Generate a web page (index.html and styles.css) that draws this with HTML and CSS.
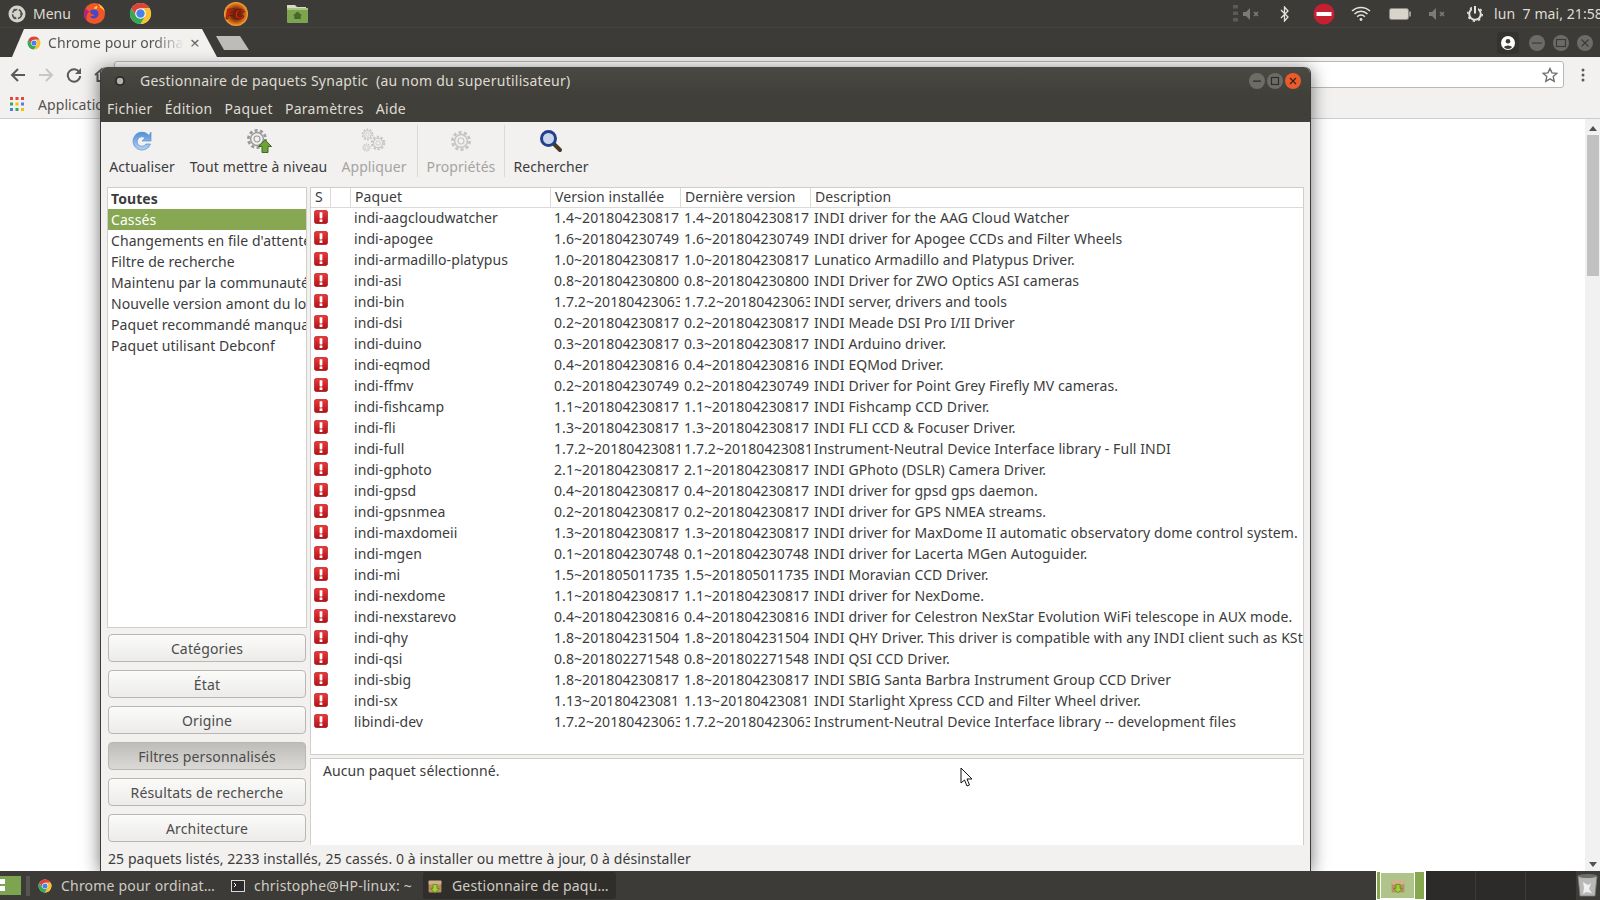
FILE: index.html
```html
<!DOCTYPE html>
<html lang="fr">
<head>
<meta charset="utf-8">
<title>Gestionnaire de paquets Synaptic</title>
<link rel="stylesheet" href="styles.css">
</head>
<body>
<svg class="defs" width="0" height="0">
  <defs>
    <linearGradient id="errg" x1="0" y1="0" x2="0" y2="1"><stop offset="0" stop-color="#ee3a3a"/><stop offset="1" stop-color="#b01218"/></linearGradient>
    <linearGradient id="refg" x1="0" y1="0" x2="0" y2="1"><stop offset="0" stop-color="#4f8fd8"/><stop offset="1" stop-color="#b7d2ee"/></linearGradient>
    <radialGradient id="fcg"><stop offset="0.4" stop-color="#6d2608"/><stop offset="0.82" stop-color="#e0701a"/><stop offset="1" stop-color="#f4ae3a"/></radialGradient>
    <symbol id="err" viewBox="0 0 14 14"><rect x="0.3" y="0.3" width="13.4" height="13.4" rx="2.6" fill="url(#errg)" stroke="#a11419" stroke-width="0.6"/><rect x="5.6" y="2.2" width="2.8" height="6.2" rx="0.6" fill="#fff"/><rect x="5.6" y="9.4" width="2.8" height="2.6" fill="#fff"/></symbol>
    <symbol id="chrome" viewBox="0 0 24 24"><circle cx="12" cy="12" r="11" fill="#fff"/><path fill="#db4437" d="M2.47 6.5A11 11 0 0 1 21.53 6.5L12 6.5A5.5 5.5 0 0 0 7.24 14.75Z"/><path fill="#fbc02d" d="M21.53 6.5A11 11 0 0 1 12 23L16.76 14.75A5.5 5.5 0 0 0 12 6.5Z"/><path fill="#34a853" d="M12 23A11 11 0 0 1 2.47 6.5L7.24 14.75A5.5 5.5 0 0 0 16.76 14.75Z"/><circle cx="12" cy="12" r="4.4" fill="#4a80e8"/></symbol>
    <symbol id="gear" viewBox="0 0 24 24"><circle cx="12" cy="12" r="9.4" fill="none" stroke="currentColor" stroke-width="3" stroke-dasharray="3.4 2.5"/><circle cx="12" cy="12" r="7" fill="#eee" stroke="currentColor" stroke-width="1.6"/><circle cx="12" cy="12" r="3.2" fill="#f2f1f0" stroke="currentColor" stroke-width="1.2"/></symbol>
    <symbol id="box" viewBox="0 0 20 20"><rect x="2" y="5" width="16" height="13" rx="1" fill="#b98f60"/><rect x="2" y="3" width="16" height="5" rx="1" fill="#d4b089"/><path d="M7.5 8h5v5h3L10 18.5 4.500 13h3z" fill="#a8cf3a" stroke="#4e8a1c" stroke-width="1"/></symbol>
  </defs>
</svg>

<header class="panel">
  <div class="panel-left">
    <svg class="p-logo" width="18" height="18" viewBox="0 0 18 18"><circle cx="9" cy="9" r="8.500" fill="#d6d3cc"/><circle cx="9" cy="9" r="4.500" fill="none" stroke="#55534e" stroke-width="1.600" stroke-dasharray="6 1.500"/><circle cx="13.500" cy="9" r="1.300" fill="#55534e"/><circle cx="6.700" cy="5" r="1.300" fill="#55534e"/><circle cx="6.700" cy="13" r="1.300" fill="#55534e"/></svg>
    <span class="p-menu">Menu</span>
    <svg class="p-fx" width="23" height="23" viewBox="0 0 24 24"><circle cx="12" cy="12" r="11" fill="#f0562a"/><path d="M3 6.500C1.500 9 1 11 1 12.500c0 3 1 5.500 3 7.500-1-4 0-8 3-10.500-1.500 0-3-1-4-3z" fill="#b3257c"/><path d="M7.500 9.500c2.500-2.500 6.500-2 8 .5s.5 6-2.500 7c-2.500.8-5.200-.5-5.700-3 1 1 3.500 1 4.500-.3-1.500-.5-4.500-1-4.300-4.200z" fill="#4a46c8"/><path d="M12 1c4 .2 7.500 2.300 9.500 5.500.8 1.500 1.300 3 1.400 4.500-1-2.500-3-4.500-5.400-5 .5-1.800-.5-3.800-2.500-4.500-1-.3-2-.5-3.500-.5z" fill="#ffc52b"/><path d="M11 7c1-1.500 2-2.200 3.500-3 .5 1 .5 1.500 0 3z" fill="#ffd34d"/></svg>
    <svg class="p-ch" width="23" height="23"><use href="#chrome"/></svg>
    <svg class="p-fc" width="24" height="24" viewBox="0 0 24 24"><circle cx="12" cy="12" r="12" fill="url(#fcg)"/><text x="1.500" y="17" class="fc-text">FC</text></svg>
    <svg class="p-folder" width="21" height="19" viewBox="0 0 21 19"><path d="M0 1h8l2 2h9v3H0z" fill="#d9d9c8"/><rect y="4" width="21" height="15" rx="1" fill="#7da44f"/><rect y="4" width="21" height="2" fill="#a6c67c"/><path d="M10.500 7.500l4.500 4h-1.300v3.500h-6.400v-3.500h-1.300z" fill="#46682a"/></svg>
  </div>
  <div class="panel-right">
    <svg class="p-dots" width="5" height="17"><rect width="5" height="3.500" fill="#5c5b57"/><rect y="6.500" width="5" height="3.500" fill="#5c5b57"/><rect y="13" width="5" height="3.500" fill="#5c5b57"/></svg>
    <svg class="p-spk" width="18" height="12" viewBox="0 0 18 12"><path d="M0 4h3l4-4v12L3 8H0z" fill="#7c7b76"/><path d="M11 4l4 4M15 4l-4 4" stroke="#7c7b76" stroke-width="1.600"/></svg>
    <svg class="p-bt" width="9" height="16" viewBox="0 0 9 16"><path d="M1 4l7 7-3.500 4V1L8 5 1 12" fill="none" stroke="#e6e3dc" stroke-width="1.300"/></svg>
    <svg class="p-stop" width="22" height="22" viewBox="0 0 22 22"><circle cx="11" cy="11" r="10.500" fill="#c51f32"/><rect x="3.500" y="9" width="15" height="4" fill="#fff"/></svg>
    <svg class="p-wifi" width="20" height="15" viewBox="0 0 20 15"><path d="M1 5a13 13 0 0 1 18 0M3.500 8a9 9 0 0 1 13 0M6.200 10.800a5 5 0 0 1 7.600 0" fill="none" stroke="#e6e3dc" stroke-width="1.500"/><circle cx="10" cy="13.500" r="1.400" fill="#e6e3dc"/></svg>
    <svg class="p-bat" width="22" height="12" viewBox="0 0 22 12"><rect x="0.500" y="0.500" width="19" height="11" rx="2" fill="#d8d4cb" stroke="#8b8a85"/><rect x="20" y="3.500" width="2" height="5" fill="#9b9a95"/></svg>
    <svg class="p-spk2" width="18" height="12" viewBox="0 0 18 12"><path d="M0 4h3l4-4v12L3 8H0z" fill="#7c7b76"/><path d="M11 4l4 4M15 4l-4 4" stroke="#7c7b76" stroke-width="1.600"/></svg>
    <svg class="p-pow" width="16" height="16" viewBox="0 0 16 16"><circle cx="8" cy="8" r="5.800" fill="none" stroke="#e6e3dc" stroke-width="2"/><circle cx="8" cy="8" r="7.200" fill="none" stroke="#e6e3dc" stroke-width="1.600" stroke-dasharray="2.200 3.450"/><rect x="5" y="0" width="6" height="6" fill="#3c3b37"/><rect x="7" y="0" width="2" height="7.500" fill="#e6e3dc"/></svg>
    <span class="p-date">lun  7 mai, 21:58</span>
  </div>
</header>

<main class="browser">
  <div class="tabstrip">
    <div class="tab">
      <svg class="tab-ic" width="14" height="14"><use href="#chrome"/></svg>
      <span class="tab-title">Chrome pour ordina</span>
      <span class="tab-x">×</span>
    </div>
    <div class="newtab"></div>
    <div class="win-ctl">
      <span class="profile"><svg width="14" height="14" viewBox="0 0 14 14"><circle cx="7" cy="7" r="7" fill="#fff"/><circle cx="7" cy="5.300" r="2.300" fill="#3c3b37"/><path d="M2.800 11a5 3.500 0 0 1 8.400 0 5.500 5.500 0 0 1-8.400 0z" fill="#3c3b37"/></svg></span>
      <span class="cb"><svg width="16" height="16"><rect x="3" y="7.500" width="10" height="1.200" fill="#3c3b37"/></svg></span>
      <span class="cb"><svg width="16" height="16"><rect x="3.500" y="4.500" width="9" height="7" fill="none" stroke="#3c3b37" stroke-width="1.200"/></svg></span>
      <span class="cb"><svg width="16" height="16"><path d="M4.500 4.500l7 7M11.500 4.500l-7 7" stroke="#3c3b37" stroke-width="1.200"/></svg></span>
    </div>
  </div>
  <div class="navbar">
    <svg class="nav-ic" width="16" height="16" viewBox="0 0 16 16"><path d="M15 8H2M8 2L2 8l6 6" fill="none" stroke="#5a5a5a" stroke-width="2"/></svg>
    <svg class="nav-ic" width="16" height="16" viewBox="0 0 16 16"><path d="M1 8h13M8 2l6 6-6 6" fill="none" stroke="#c6c6c6" stroke-width="2"/></svg>
    <svg class="nav-ic" width="16" height="16" viewBox="0 0 16 16"><path d="M13.500 5.500A6.200 6.200 0 1 0 14.200 9" fill="none" stroke="#5a5a5a" stroke-width="2"/><path d="M15 1v6H9z" fill="#5a5a5a"/></svg>
    <svg class="nav-ic" width="16" height="16" viewBox="0 0 16 16"><path d="M1 8l7-6 7 6M3.500 7v7h9V7" fill="none" stroke="#5a5a5a" stroke-width="2"/></svg>
    <div class="omnibox">
      <svg width="16" height="16" viewBox="0 0 16 16"><path d="M8 1.500l2 4.400 4.700.5-3.500 3.200 1 4.700L8 11.900l-4.200 2.400 1-4.700L1.300 6.400 6 5.900z" fill="none" stroke="#6f6f6f" stroke-width="1.400"/></svg>
    </div>
    <svg class="menu-ic" width="4" height="14"><circle cx="2" cy="2" r="1.500" fill="#5a5a5a"/><circle cx="2" cy="7" r="1.500" fill="#5a5a5a"/><circle cx="2" cy="12" r="1.500" fill="#5a5a5a"/></svg>
  </div>
  <div class="bookmarks">
    <svg width="14" height="14" viewBox="0 0 14 14"><rect width="3" height="3" fill="#e8453c"/><rect x="5.500" width="3" height="3" fill="#e8453c"/><rect x="11" width="3" height="3" fill="#e8453c"/><rect y="5.500" width="3" height="3" fill="#34a853"/><rect x="5.500" y="5.500" width="3" height="3" fill="#fbbc05"/><rect x="11" y="5.500" width="3" height="3" fill="#4a80e8"/><rect y="11" width="3" height="3" fill="#4a80e8"/><rect x="5.500" y="11" width="3" height="3" fill="#34a853"/><rect x="11" y="11" width="3" height="3" fill="#fbbc05"/></svg>
    <span class="bm-text">Applications</span>
  </div>
  <div class="page">
    <div class="scrollbar">
      <span class="arrow-up"></span>
      <span class="thumb"></span>
      <span class="arrow-down"></span>
    </div>
  </div>
</main>

<section class="window">
  <div class="titlebar">
    <svg class="menu-dot" width="12" height="12"><circle cx="6" cy="6" r="5" fill="#2d2c28"/><circle cx="6" cy="6" r="3.200" fill="#b5b3ad"/></svg>
    <span class="wtitle">Gestionnaire de paquets Synaptic  (au nom du superutilisateur)</span>
    <div class="wbtns">
      <span class="wb"><svg width="18" height="18"><rect x="5" y="8.500" width="8" height="1.300" fill="#2f2e2b"/></svg></span>
      <span class="wb"><svg width="18" height="18"><rect x="5.500" y="5.500" width="7" height="7" fill="none" stroke="#2f2e2b" stroke-width="1.200"/></svg></span>
      <span class="wb wb-close"><svg width="18" height="18"><path d="M6 6l6 6M12 6l-6 6" stroke="#3a2015" stroke-width="1.200"/></svg></span>
    </div>
  </div>
  <nav class="menubar">
    <span>Fichier</span><span>Édition</span><span>Paquet</span><span>Paramètres</span><span>Aide</span>
  </nav>
  <div class="toolbar">
    <div class="tool t1">
      <svg width="24" height="24" viewBox="0 0 24 24"><path d="M19 6.500A9 9 0 1 0 20.500 15h-4.600A4.700 4.700 0 1 1 15 9l-3 3h9V3z" fill="url(#refg)" stroke="#5a94d6" stroke-width="0.700"/></svg>
      <span>Actualiser</span>
    </div>
    <div class="tool t2">
      <span class="upg"><svg class="ic-gear" width="22" height="22"><use href="#gear"/></svg><svg class="up-arrow" width="14" height="14" viewBox="0 0 14 14"><path d="M7 .8L13.500 7.500H10V13.500H4V7.500H.5z" fill="#6ea33c" stroke="#3f6b1d"/></svg></span>
      <span>Tout mettre à niveau</span>
    </div>
    <div class="tool t3 off">
      <svg class="ic-gears" width="26" height="26" viewBox="0 0 26 26"><svg x="0" y="0" width="13" height="13"><use href="#gear"/></svg><svg x="9" y="7" width="16" height="16"><use href="#gear"/></svg><svg x="1" y="15" width="9" height="9"><use href="#gear"/></svg></svg>
      <span>Appliquer</span>
    </div>
    <div class="tool t4 off">
      <svg class="ic-gears" width="22" height="22"><use href="#gear"/></svg>
      <span>Propriétés</span>
    </div>
    <div class="tool t5">
      <svg width="24" height="24" viewBox="0 0 24 24"><path d="M14 14l7 7" stroke="#4a3a22" stroke-width="4" stroke-linecap="round"/><circle cx="9.500" cy="9.500" r="7" fill="#c9d6ea" stroke="#23408c" stroke-width="3"/></svg>
      <span>Rechercher</span>
    </div>
  </div>

  <div class="content">
    <aside class="side">
      <ul class="filters">
        <li class="f-head">Toutes</li>
        <li class="f-sel">Cassés</li>
        <li>Changements en file d'attente</li>
        <li>Filtre de recherche</li>
        <li>Maintenu par la communauté</li>
        <li>Nouvelle version amont du local</li>
        <li>Paquet recommandé manquant</li>
        <li>Paquet utilisant Debconf</li>
      </ul>
      <div class="sbtns">
        <button>Catégories</button>
        <button>État</button>
        <button>Origine</button>
        <button class="on">Filtres personnalisés</button>
        <button>Résultats de recherche</button>
        <button>Architecture</button>
      </div>
    </aside>
    <div class="right">
      <div class="tablewrap">
        <table>
          <colgroup><col class="c-s"><col class="c-m"><col class="c-p"><col class="c-v"><col class="c-d"><col></colgroup>
          <thead><tr><th>S</th><th></th><th>Paquet</th><th>Version installée</th><th>Dernière version</th><th>Description</th></tr></thead>
          <tbody>
            <tr><td><svg class="err"><use href="#err"/></svg></td><td></td><td>indi-aagcloudwatcher</td><td>1.4~201804230817~</td><td>1.4~201804230817~</td><td>INDI driver for the AAG Cloud Watcher</td></tr>
            <tr><td><svg class="err"><use href="#err"/></svg></td><td></td><td>indi-apogee</td><td>1.6~201804230749~</td><td>1.6~201804230749~</td><td>INDI driver for Apogee CCDs and Filter Wheels</td></tr>
            <tr><td><svg class="err"><use href="#err"/></svg></td><td></td><td>indi-armadillo-platypus</td><td>1.0~201804230817~</td><td>1.0~201804230817~</td><td>Lunatico Armadillo and Platypus Driver.</td></tr>
            <tr><td><svg class="err"><use href="#err"/></svg></td><td></td><td>indi-asi</td><td>0.8~201804230800~</td><td>0.8~201804230800~</td><td>INDI Driver for ZWO Optics ASI cameras</td></tr>
            <tr><td><svg class="err"><use href="#err"/></svg></td><td></td><td>indi-bin</td><td>1.7.2~201804230630</td><td>1.7.2~201804230630</td><td>INDI server, drivers and tools</td></tr>
            <tr><td><svg class="err"><use href="#err"/></svg></td><td></td><td>indi-dsi</td><td>0.2~201804230817~</td><td>0.2~201804230817~</td><td>INDI Meade DSI Pro I/II Driver</td></tr>
            <tr><td><svg class="err"><use href="#err"/></svg></td><td></td><td>indi-duino</td><td>0.3~201804230817~</td><td>0.3~201804230817~</td><td>INDI Arduino driver.</td></tr>
            <tr><td><svg class="err"><use href="#err"/></svg></td><td></td><td>indi-eqmod</td><td>0.4~201804230816~</td><td>0.4~201804230816~</td><td>INDI EQMod Driver.</td></tr>
            <tr><td><svg class="err"><use href="#err"/></svg></td><td></td><td>indi-ffmv</td><td>0.2~201804230749~</td><td>0.2~201804230749~</td><td>INDI Driver for Point Grey Firefly MV cameras.</td></tr>
            <tr><td><svg class="err"><use href="#err"/></svg></td><td></td><td>indi-fishcamp</td><td>1.1~201804230817~</td><td>1.1~201804230817~</td><td>INDI Fishcamp CCD Driver.</td></tr>
            <tr><td><svg class="err"><use href="#err"/></svg></td><td></td><td>indi-fli</td><td>1.3~201804230817~</td><td>1.3~201804230817~</td><td>INDI FLI CCD &amp; Focuser Driver.</td></tr>
            <tr><td><svg class="err"><use href="#err"/></svg></td><td></td><td>indi-full</td><td>1.7.2~201804230817</td><td>1.7.2~201804230817</td><td>Instrument-Neutral Device Interface library - Full INDI</td></tr>
            <tr><td><svg class="err"><use href="#err"/></svg></td><td></td><td>indi-gphoto</td><td>2.1~201804230817~</td><td>2.1~201804230817~</td><td>INDI GPhoto (DSLR) Camera Driver.</td></tr>
            <tr><td><svg class="err"><use href="#err"/></svg></td><td></td><td>indi-gpsd</td><td>0.4~201804230817~</td><td>0.4~201804230817~</td><td>INDI driver for gpsd gps daemon.</td></tr>
            <tr><td><svg class="err"><use href="#err"/></svg></td><td></td><td>indi-gpsnmea</td><td>0.2~201804230817~</td><td>0.2~201804230817~</td><td>INDI driver for GPS NMEA streams.</td></tr>
            <tr><td><svg class="err"><use href="#err"/></svg></td><td></td><td>indi-maxdomeii</td><td>1.3~201804230817~</td><td>1.3~201804230817~</td><td>INDI driver for MaxDome II automatic observatory dome control system.</td></tr>
            <tr><td><svg class="err"><use href="#err"/></svg></td><td></td><td>indi-mgen</td><td>0.1~201804230748~</td><td>0.1~201804230748~</td><td>INDI driver for Lacerta MGen Autoguider.</td></tr>
            <tr><td><svg class="err"><use href="#err"/></svg></td><td></td><td>indi-mi</td><td>1.5~201805011735~</td><td>1.5~201805011735~</td><td>INDI Moravian CCD Driver.</td></tr>
            <tr><td><svg class="err"><use href="#err"/></svg></td><td></td><td>indi-nexdome</td><td>1.1~201804230817~</td><td>1.1~201804230817~</td><td>INDI driver for NexDome.</td></tr>
            <tr><td><svg class="err"><use href="#err"/></svg></td><td></td><td>indi-nexstarevo</td><td>0.4~201804230816~</td><td>0.4~201804230816~</td><td>INDI driver for Celestron NexStar Evolution WiFi telescope in AUX mode.</td></tr>
            <tr><td><svg class="err"><use href="#err"/></svg></td><td></td><td>indi-qhy</td><td>1.8~201804231504~</td><td>1.8~201804231504~</td><td>INDI QHY Driver. This driver is compatible with any INDI client such as KStars</td></tr>
            <tr><td><svg class="err"><use href="#err"/></svg></td><td></td><td>indi-qsi</td><td>0.8~201802271548~</td><td>0.8~201802271548~</td><td>INDI QSI CCD Driver.</td></tr>
            <tr><td><svg class="err"><use href="#err"/></svg></td><td></td><td>indi-sbig</td><td>1.8~201804230817~</td><td>1.8~201804230817~</td><td>INDI SBIG Santa Barbra Instrument Group CCD Driver</td></tr>
            <tr><td><svg class="err"><use href="#err"/></svg></td><td></td><td>indi-sx</td><td>1.13~201804230817</td><td>1.13~201804230817</td><td>INDI Starlight Xpress CCD and Filter Wheel driver.</td></tr>
            <tr><td><svg class="err"><use href="#err"/></svg></td><td></td><td>libindi-dev</td><td>1.7.2~201804230630</td><td>1.7.2~201804230630</td><td>Instrument-Neutral Device Interface library -- development files</td></tr>
          </tbody>
        </table>
      </div>
      <div class="details">Aucun paquet sélectionné.</div>
    </div>
  </div>
  <footer class="status">25 paquets listés, 2233 installés, 25 cassés. 0 à installer ou mettre à jour, 0 à désinstaller</footer>
</section>

<svg class="cursor" width="14" height="20" viewBox="0 0 14 20"><path d="M1 1v15l3.500-3 2.500 6 2.500-1-2.500-6H12z" fill="#fff" stroke="#111" stroke-width="1"/></svg>

<footer class="taskbar">
  <svg class="tb-desk" width="21" height="19" viewBox="0 0 21 19"><rect width="21" height="19" fill="#7da44f"/><rect y="3" width="5" height="5" fill="#fff"/><rect y="10" width="5" height="5" fill="#fff"/></svg>
  <span class="tb-sep"></span>
  <div class="tb-item"><svg width="14" height="14"><use href="#chrome"/></svg><span>Chrome pour ordinat…</span></div>
  <div class="tb-item"><svg width="14" height="14" viewBox="0 0 14 14"><rect x="0.500" y="1.500" width="13" height="11" fill="#2b2b2b" stroke="#d8d8d8"/><path d="M3 4l2 2-2 2" stroke="#fff" fill="none"/></svg><span>christophe@HP-linux: ~</span></div>
  <div class="tb-item tb-active"><svg width="16" height="16"><use href="#box"/></svg><span>Gestionnaire de paqu…</span></div>
  <div class="tb-spacer"></div>
  <div class="ws ws-active"><div class="ws-win"><svg width="16" height="16"><use href="#box"/></svg></div></div>
  <div class="ws"></div><div class="ws"></div><div class="ws ws-end"></div>
  <svg class="trash" width="21" height="26" viewBox="0 0 21 26"><path d="M1 3h19l-2 20H3z" fill="#b8b8b6" stroke="#777" stroke-width="0.800"/><ellipse cx="10.500" cy="3" rx="9.500" ry="2" fill="#6d6d6b"/><path d="M6 9l5 3 3-2-2 6 3 4-6-1-3 2 1-6z" fill="#efefef"/></svg>
</footer>
</body>
</html>
```

FILE: styles.css
```css
* { box-sizing: border-box; }
html, body { margin: 0; padding: 0; }
body {
  width: 1600px; height: 900px; overflow: hidden;
  display: flex; flex-direction: column;
  position: relative;
  font-family: "Noto Sans", "Liberation Sans", sans-serif;
  font-size: 14px; letter-spacing: .08px; color: #3c3c3c; background: #fff;
}
.defs { position: absolute; }

/* top panel */
.panel {
  height: 28px; flex: none; background: #3c3b37;
  display: flex; justify-content: space-between; align-items: center;
  color: #dfdbd2; border-bottom: 1px solid #45443f;
}
.panel-left, .panel-right { display: flex; align-items: center; }
.p-logo { margin-left: 8px; }
.p-menu { margin-left: 7px; width: 37px; letter-spacing: 0; }
.p-fx { margin-left: 13px; }
.p-ch { margin-left: 23px; }
.p-fc { margin-left: 72px; }
.p-folder { margin-left: 39px; }
.p-dots { margin-right: 5px; }
.p-spk { margin-right: 19px; }
.p-bt { margin-right: 24px; }
.p-stop { margin-right: 16px; }
.p-wifi { margin-right: 18px; }
.p-bat { margin-right: 18px; }
.p-spk2 { margin-right: 20px; }
.p-pow { margin-right: 11px; }
.p-date { width: 106px; white-space: pre; }

/* chrome */
.browser { flex: 1; display: flex; flex-direction: column; min-height: 0; }
.tabstrip {
  height: 29px; flex: none; background: #3c3b37;
  display: flex; align-items: flex-end; position: relative;
}
.tab {
  width: 205px; height: 28px; margin-left: 12px; background: #f2f1f0;
  clip-path: polygon(0 100%, 12px 0, 190px 0, 100% 100%);
  display: flex; align-items: center; padding: 0 0 2px 15px;
}
.tab-ic { flex: none; margin-top: 2px; }
.tab-title {
  margin-left: 7px; width: 136px; overflow: hidden; white-space: nowrap; color: #55534e;
  -webkit-mask-image: linear-gradient(90deg, #000 78%, transparent);
  mask-image: linear-gradient(90deg, #000 78%, transparent);
}
.tab-x { margin-left: 6px; font-size: 17px; color: #666; }
.newtab {
  width: 33px; height: 14px; margin: 0 0 7px -1px; background: #bdbcb9;
  clip-path: polygon(0 0, 24px 0, 100% 100%, 8px 100%);
}
.win-ctl { margin: 0 0 0 auto; display: flex; align-items: center; height: 28px; padding-right: 7px; gap: 8px; align-self: center; }
.profile {
  width: 22px; height: 22px; display: flex; align-items: center; justify-content: center;
  background: #34332f; border-radius: 3px; margin-right: 2px;
}
.cb {
  width: 16px; height: 16px; border-radius: 50%; background: #6c6b67;
  display: block; line-height: 0;
}
.navbar {
  height: 33px; flex: none; background: #f2f1f0; display: flex; align-items: center;
  padding-left: 10px;
}
.nav-ic { margin: 2px 12px 0 0; flex: none; }
.omnibox {
  width: 1450px; height: 27px; margin: 2px 0 0 -8px; background: #fff;
  border: 1px solid #b8b8b8; border-radius: 3px;
  display: flex; align-items: center; justify-content: flex-end; padding-right: 5px;
}
.menu-ic { margin: 2px 0 0 17px; }
.bookmarks {
  height: 29px; flex: none; background: #f2f1f0; border-bottom: 1px solid #ccc;
  display: flex; align-items: center; padding-left: 10px;
}
.bm-text { margin-left: 14px; color: #55534e; }
.page { flex: 1; display: flex; justify-content: flex-end; background: #fff; min-height: 0; }
.scrollbar {
  width: 15px; background: #f1f1f1; display: flex; flex-direction: column; align-items: center;
  position: relative; padding: 7px 0 4px;
}
.arrow-up { width: 0; height: 0; border: 4px solid transparent; border-top: 0; border-bottom: 5px solid #505050; }
.thumb { width: 12px; height: 141px; margin-top: 4px; background: #c1c1c1; }
.arrow-down { width: 0; height: 0; margin-top: auto; border: 4px solid transparent; border-bottom: 0; border-top: 5px solid #505050; }

/* synaptic window */
.window {
  position: absolute; left: 100px; top: 67px; width: 1211px; height: 804px;
  background: #f2f1f0; border-radius: 6px 6px 0 0;
  border-left: 1px solid #3c3b37; border-right: 1px solid #3c3b37;
  box-shadow: 0 2px 18px rgba(0,0,0,.55);
  display: flex; flex-direction: column;
}
.titlebar {
  height: 28px; flex: none; background: linear-gradient(#4a4944, #403f3a);
  border-radius: 6px 6px 0 0; display: flex; align-items: center;
  color: #dfdbd2; padding: 0 0 1px 13px;
}
.wtitle { margin-left: 14px; white-space: pre; letter-spacing: .25px; }
.wbtns { margin-left: auto; margin-right: 9px; display: flex; gap: 0; }
.wb {
  width: 16px; height: 16px; margin-left: 2px; border-radius: 50%; background: #6d6c67;
  display: flex; align-items: center; justify-content: center;
}
.wb svg { flex: none; }
.wb-close { background: #ea5b2a; }
.menubar {
  height: 27px; flex: none; background: #403f3a; color: #dfdbd2;
  display: flex; align-items: center; padding-left: 6px; gap: 12px; letter-spacing: .3px;
}
.toolbar { height: 61px; flex: none; display: flex; padding-top: 3px; background: #f2f1f0; }
.tool { display: flex; flex-direction: column; align-items: center; color: #3c3c3c; white-space: nowrap; flex: none; }
.tool > svg, .upg { height: 26px; margin-top: 3px; display: block; }
.tool > span:last-child { margin-top: 3px; line-height: 20px; }
.t1 { width: 82px; }
.t2 { width: 151px; }
.t3 { width: 83px; padding-right: 3px; }
.t4 { width: 88px; border-left: 1px solid #dcdad6; border-right: 1px solid #dcdad6; height: 52px; }
.t5 { width: 92px; }
.off { color: #a5a4a1; }
.ic-gear { color: #9a9a9a; }
.ic-gears { color: #c5c4c1; }
.upg { position: relative; width: 24px; margin-right: 2px; }
.up-arrow { position: absolute; right: -2px; bottom: 1px; }

.content { flex: 1; display: flex; min-height: 0; padding: 4px 6px 0 6px; gap: 3px; }
.side { width: 200px; flex: none; display: flex; flex-direction: column; }
.filters {
  list-style: none; margin: 0; padding: 0; flex: none; height: 441px; background: #fff;
  border: 1px solid #d0cec9; overflow: hidden;
}
.filters li { height: 21px; line-height: 21px; padding-left: 3px; white-space: nowrap; overflow: hidden; }
.f-head { font-weight: 700; }
.f-sel { background: #87a752; color: #fff; }
.sbtns { display: flex; flex-direction: column; gap: 8px; margin-top: 6px; padding: 0 1px; }
.sbtns button {
  height: 28px; font: inherit; letter-spacing: .15px; color: #4c4c4c; border: 1px solid #b9b7b2; border-radius: 4px;
  background: linear-gradient(#fbfbfa, #ecebe9); padding: 0;
}
.sbtns button.on { background: linear-gradient(#bfbdb9, #dad9d6); }
.right { flex: 1; display: flex; flex-direction: column; min-width: 0; }
.tablewrap { height: 568px; flex: none; background: #fff; border: 1px solid #d0cec9; overflow: hidden; }
table { width: 100%; border-collapse: separate; border-spacing: 0; table-layout: fixed; }
.c-s { width: 20px; } .c-m { width: 20px; } .c-p { width: 200px; } .c-v { width: 130px; } .c-d { width: 130px; }
th {
  height: 20px; font-weight: 400; text-align: left; padding: 0 0 2px 4px;
  border-right: 1px solid #dcdad6; border-bottom: 1px solid #dcdad6; background: #fff; white-space: nowrap; overflow: hidden; line-height: 17px;
}
th:last-child { border-right: 0; }
td { height: 21px; padding: 0 0 2px 3px; white-space: nowrap; overflow: hidden; line-height: 19px; letter-spacing: .08px; }
td:first-child { padding: 0 0 0 3px; line-height: 0; }
td:nth-child(4), td:nth-child(5) { border-right: 1px solid #fff; }
.err { width: 14px; height: 14px; display: block; margin-bottom: 3px; }
.details {
  margin-top: 3px; flex: 1; background: #fff; border: 1px solid #d0cec9; border-bottom: 0;
  padding: 1px 0 0 12px; line-height: 21px;
}
.status { height: 26px; flex: none; padding: 3px 0 0 7px; line-height: 21px; white-space: nowrap; letter-spacing: .085px; }
.cursor { position: absolute; left: 960px; top: 767px; }

/* taskbar */
.taskbar {
  height: 29px; flex: none; background: #3c3b37; display: flex; align-items: center;
  color: #cfccc4; position: relative; z-index: 2; letter-spacing: .2px;
}
.tb-desk { flex: none; }
.tb-sep { width: 4px; height: 20px; margin: 0 8px 0 5px; background: #55544f; }
.tb-item { display: flex; align-items: center; gap: 9px; height: 27px; padding: 0 8px 0 0; white-space: nowrap; margin-right: 8px; }
.tb-active { background: #2f2e2b; border-radius: 3px; padding: 0 7px 0 4px; margin-left: -5px; margin-right: 0; }
.tb-spacer { flex: 1; }
.ws { width: 50px; height: 29px; background: #2c2b29; border-right: 1px solid #3c3b37; }
.ws-active { background: #86a84f; border: 1px solid #fff; border-right: 2px solid #fff; padding: 0 9px 0 3px; }
.ws-win { height: 100%; background: #aec48a; border: 1px solid #fff; display: flex; align-items: center; justify-content: center; }
.ws-end { border-right: 0; }
.trash { margin: 0 2px 0 1px; flex: none; }
.fc-text { font: italic 700 14px "Liberation Sans", sans-serif; fill: #e3241a; stroke: #1a0a02; stroke-width: .4px; }
```
